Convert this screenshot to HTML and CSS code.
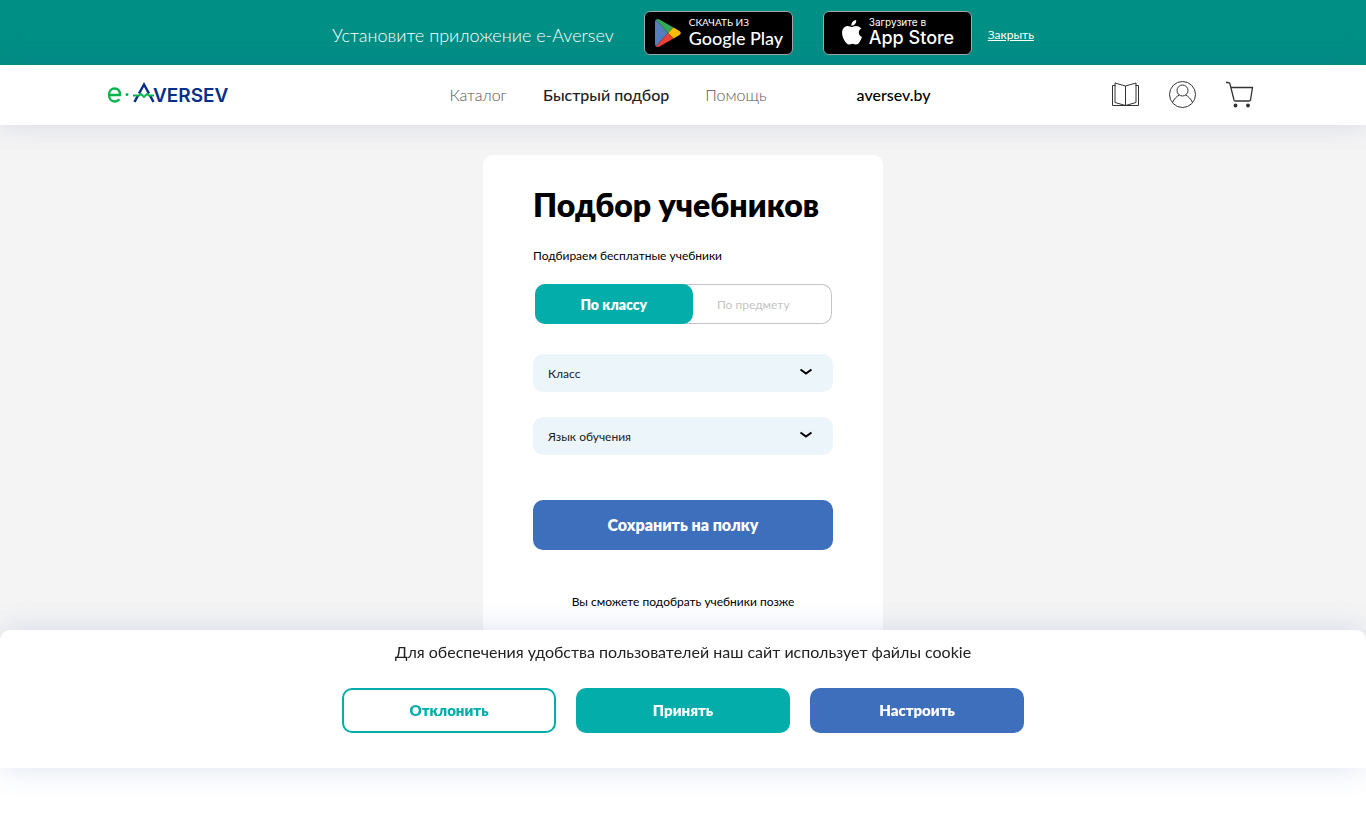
FILE: index.html
```html
<!DOCTYPE html>
<html lang="ru">
<head>
    <meta charset="UTF-8">
    <meta name="viewport" content="width=device-width, initial-scale=1.0">
    <title>Подбор учебников</title>
    <link rel="stylesheet" href="styles.css">
</head>
<body>
    <!-- Баннер приложения -->
    <div class="app-banner">
        <span class="app-banner-text">Установите приложение e-Aversev</span>
        <a href="#" class="store-badge google">
            <svg class="play-icon" width="26" height="30" viewBox="0 0 26 30">
                <path d="M1 1.5 13 15 1 28.500Q0 27.500 0 26V4Q0 2.500 1 1.500z" fill="#557ebf"/>
                <path d="M1 1.500Q2.500.300 4.500 1.500L18.500 9.500 13 15z" fill="#34a853"/>
                <path d="M18.500 9.500 24.500 13Q27 15 24.500 17L18.500 20.500 13 15z" fill="#fbbc04"/>
                <path d="M1 28.500Q2.500 29.700 4.500 28.500L18.500 20.500 13 15z" fill="#ea4335"/>
            </svg>
            <span class="store-text">
                <span class="store-small">СКАЧАТЬ ИЗ</span>
                <span class="store-name">Google Play</span>
            </span>
        </a>
        <a href="#" class="store-badge apple">
            <svg class="apple-icon" width="20" height="25" viewBox="0 0 20 25" fill="#fff">
                <path d="M14.200 0c.2 1.500-.4 3-1.200 4-1 1.100-2.200 1.800-3.600 1.700-.2-1.500.5-3 1.300-3.900C11.600.800 13 .100 14.200 0z"/>
                <path d="M19.200 8.500c-1.600 1-2.500 2.300-2.400 4.100 0 2.200 1.200 3.700 3.200 4.500-.6 1.900-1.500 3.700-2.700 5.400-.8 1.100-1.800 2-3.200 2-1.300 0-1.900-.8-3.600-.8s-2.300.8-3.600.8c-1.400 0-2.400-1-3.300-2.200C.700 18.700-.900 13 .700 9.600 1.700 7.500 3.600 6.100 5.700 6.100c1.500 0 2.900 1 3.900 1 .9 0 2.600-1.200 4.500-1.100 2.100.1 3.900.9 5.100 2.500z"/>
            </svg>
            <span class="store-text">
                <span class="store-small">Загрузите в</span>
                <span class="store-name">App Store</span>
            </span>
        </a>
        <button type="button" class="banner-close">Закрыть</button>
    </div>

    <!-- Шапка сайта -->
    <header class="header">
        <a href="#" class="logo" aria-label="e-Aversev">
            <svg width="126" height="28" viewBox="0 0 126 28">
                <path d="M2 15H13C13 10.500 10.500 8.500 7.500 8.500S2 11 2 15s2.500 6.500 5.700 6.500c2.200 0 3.700-.8 4.700-2.300" fill="none" stroke="#09b44d" stroke-width="2.300"/>
                <circle cx="20" cy="14.500" r="1.500" fill="#09b44d"/>
                <path d="M27.500 22 31 15.500M32 13.500 37 4.500 42 13.500M43 15.500 46.500 22" fill="none" stroke="#062f87" stroke-width="2.500"/>
                <path d="M26 15.500h6l2-1.500 3 3 3-3 2 1.500h5" fill="none" stroke="#09b44d" stroke-width="1.800"/>
                <text x="46" y="22" class="logo-text">VERSEV</text>
            </svg>
        </a>
        <nav class="nav">
            <a href="#">Каталог</a>
            <a href="#" class="active">Быстрый подбор</a>
            <a href="#">Помощь</a>
            <a href="#" class="site-link">aversev.by</a>
        </nav>
        <div class="header-icons">
            <a href="#" aria-label="Полка">
                <svg width="28" height="28" viewBox="0 0 28 28">
                    <path d="M3.500 4.500h-3v20h26v-20h-3M13.500 5 3 2v19.500l10.500 3 10.500-3V2zM13.500 5v19.500"/>
                </svg>
            </a>
            <a href="#" aria-label="Профиль">
                <svg width="28" height="28" viewBox="0 0 28 28">
                    <circle cx="13.500" cy="13.500" r="13"/>
                    <circle cx="13.500" cy="9.500" r="5.500"/>
                    <path d="M3.500 21.700c1.500-4 4-6 6.800-7.700M23.500 21.700c-1.500-4-4-6-6.800-7.700"/>
                </svg>
            </a>
            <a href="#" aria-label="Корзина">
                <svg width="28" height="28" viewBox="0 0 28 28">
                    <path d="M0 1.500h2q1.500 0 2 1.500l4 16q.3 1 1.300 1H23q1.200 0 1.500-1L26.500 6.500H5" stroke-width="1.300"/>
                    <circle cx="9.500" cy="24.500" r="1.900" class="wheel"/>
                    <circle cx="22" cy="24.500" r="1.900" class="wheel"/>
                </svg>
            </a>
        </div>
    </header>

    <!-- Форма подбора -->
    <main class="main">
        <form class="card">
            <h1>Подбор учебников</h1>
            <p class="subtitle">Подбираем бесплатные учебники</p>
            <div class="tabs">
                <button type="button" class="tab tab-active">По классу</button>
                <button type="button" class="tab">По предмету</button>
            </div>
            <div class="field">
                <select aria-label="Класс">
                    <option>Класс</option>
                </select>
                <svg class="arrow" width="14" height="8" viewBox="0 0 14 8"><path d="M1.500 1.500 7 5.500l5.500-4"/></svg>
            </div>
            <div class="field">
                <select aria-label="Язык обучения">
                    <option>Язык обучения</option>
                </select>
                <svg class="arrow" width="14" height="8" viewBox="0 0 14 8"><path d="M1.500 1.500 7 5.500l5.500-4"/></svg>
            </div>
            <button type="submit" class="btn btn-save">Сохранить на полку</button>
            <p class="later">Вы сможете подобрать учебники позже</p>
        </form>
    </main>

    <!-- Уведомление о cookie -->
    <div class="cookie">
        <p>Для обеспечения удобства пользователей наш сайт использует файлы cookie</p>
        <div class="cookie-buttons">
            <button type="button" class="btn btn-outline">Отклонить</button>
            <button type="button" class="btn btn-accept">Принять</button>
            <button type="button" class="btn">Настроить</button>
        </div>
    </div>
</body>
</html>
```
FILE: styles.css
```css
* {
    box-sizing: border-box;
}

body {
    margin: 0;
    background: #fff;
    color: #000;
    font-family: Lato, "Liberation Sans", sans-serif;
    font-size: 12px;
}

a {
    color: inherit;
    text-decoration: none;
}

button,
select {
    font-family: inherit;
    cursor: pointer;
}

/* Баннер приложения */
.app-banner {
    display: flex;
    justify-content: center;
    align-items: center;
    height: 65px;
    background: #008f85;
    color: #fff;
}

.app-banner-text {
    margin-right: 30px;
    padding-top: 4px;
    font-size: 18px;
    font-weight: 300;
}

.store-badge {
    display: flex;
    align-items: center;
    width: 149px;
    height: 44px;
    border: 1px solid #a6a6a6;
    border-radius: 6px;
    background: #000;
}

.google {
    margin-right: 30px;
    padding-left: 10px;
    gap: 8px;
}

.apple {
    margin-right: 16px;
    padding-left: 18px;
    gap: 7px;
    font-family: Inter, sans-serif;
}

.store-text {
    display: flex;
    flex-direction: column;
    padding-bottom: 2px;
    white-space: nowrap;
}

.store-small {
    font-size: 10px;
    line-height: 12px;
}

.store-name {
    font-size: 18px;
    font-weight: 500;
    line-height: 20px;
}

.banner-close {
    padding: 4px 0 0;
    border: none;
    background: none;
    color: #fff;
    font-size: 12px;
    text-decoration: underline;
}

/* Шапка */
.header {
    position: relative;
    display: grid;
    grid-template-columns: 1fr auto 1fr;
    align-items: center;
    height: 60px;
    padding: 0 112px 0 107px;
    background: #fff;
    box-shadow: 0 0 30px rgba(62, 80, 160, 0.16);
}

.logo {
    display: flex;
    padding-bottom: 2px;
}

.logo-text {
    fill: #062f87;
    font-family: Inter, sans-serif;
    font-size: 19px;
    font-weight: 600;
}

.nav {
    display: flex;
    gap: 36px;
    margin-left: 19px;
    padding-bottom: 2px;
    color: #555;
    font-size: 16px;
    font-weight: 300;
}

.nav .active {
    color: #222;
    font-weight: 500;
}

.nav .site-link {
    margin-left: 54px;
    color: #000;
    font-weight: 500;
}

.header-icons {
    display: flex;
    justify-content: flex-end;
    gap: 29px;
}

.header-icons a {
    display: flex;
}

.header-icons svg {
    fill: none;
    stroke: #333;
    stroke-width: 1;
}

.header-icons .wheel {
    fill: #333;
    stroke: none;
}

/* Карточка подбора */
.main {
    padding: 30px 0;
    background: #f4f4f4;
}

.card {
    max-width: 400px;
    margin: 0 auto;
    padding: 30px 50px 50px;
    border-radius: 10px;
    background: #fff;
}

h1 {
    margin: 0 0 22px;
    font-size: 32px;
    font-weight: 800;
    line-height: 40px;
    white-space: nowrap;
}

.subtitle {
    margin: 0 0 19px;
    line-height: 18px;
}

.tabs {
    display: flex;
    height: 40px;
    margin: 0 1px 30px 2px;
    border-radius: 10px;
    box-shadow: inset 0 0 0 1px #c4c4c4;
}

.tab {
    flex: 1;
    margin-left: -18px;
    padding: 0;
    border: none;
    border-radius: 10px;
    background: none;
    color: #c4c4c4;
    font-size: 12px;
}

.tab-active {
    margin-left: 0;
    background: #03adaa;
    color: #fff;
    font-size: 14px;
    font-weight: 800;
}

.field {
    position: relative;
    margin-bottom: 25px;
}

.field select {
    display: block;
    width: 100%;
    height: 38px;
    padding: 0 40px 0 15px;
    border: none;
    border-radius: 10px;
    background: #ebf5fa;
    color: #222;
    font-size: 12px;
    appearance: none;
}

/* Стрелка поверх списка */
.arrow {
    position: absolute;
    top: 14px;
    right: 20px;
    fill: none;
    stroke: #000;
    stroke-width: 2;
    pointer-events: none;
}

.btn {
    width: 214px;
    height: 45px;
    padding: 0 0 2px;
    border: none;
    border-radius: 10px;
    background: #3e6fbc;
    color: #fff;
    font-size: 15px;
    font-weight: 800;
}

.btn-save {
    width: 100%;
    height: 50px;
    margin-top: 20px;
    font-size: 16px;
}

.later {
    margin: 43px 0 0;
    line-height: 18px;
    text-align: center;
}

/* Уведомление о cookie */
.cookie {
    position: fixed;
    right: 0;
    bottom: 65px;
    left: 0;
    padding: 10px 20px 35px;
    border-radius: 10px 10px 0 0;
    background: #fff;
    box-shadow: 0 0 30px rgba(62, 100, 180, 0.18);
    text-align: center;
}

.cookie p {
    margin: 0 0 24px;
    color: #222;
    font-size: 16px;
    line-height: 24px;
}

.cookie-buttons {
    display: flex;
    justify-content: center;
    gap: 20px;
}

.btn-outline {
    border: 2px solid #03adaa;
    background: #fff;
    color: #03adaa;
}

.btn-accept {
    background: #03adaa;
}
```
